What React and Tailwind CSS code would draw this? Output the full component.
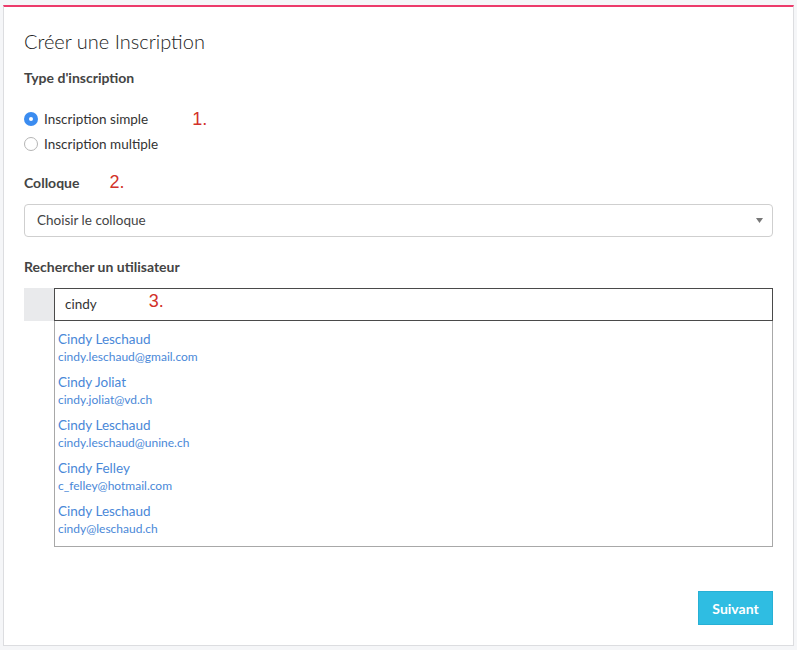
const USERS = [
  { name: 'Cindy Leschaud', email: 'cindy.leschaud@gmail.com' },
  { name: 'Cindy Joliat', email: 'cindy.joliat@vd.ch' },
  { name: 'Cindy Leschaud', email: 'cindy.leschaud@unine.ch' },
  { name: 'Cindy Felley', email: 'c_felley@hotmail.com' },
  { name: 'Cindy Leschaud', email: 'cindy@leschaud.ch' },
]

function Note({ children, className = '' }) {
  return (
    <span className={`text-[18px] font-normal leading-none text-[#d2312a] font-['Liberation_Sans',sans-serif] ${className}`}>
      {children}
    </span>
  )
}

export default function App() {
  return (
    <div className="min-h-[650px] bg-[#f5f6f8] px-[3px] pt-[5px] font-['Lato',sans-serif] text-[#333]">
      <div className="h-[641px] border-t-2 border-t-[#ec3b6b] border-x border-b border-x-[#dcdde0] border-b-[#dcdde0] bg-white px-5">
        <h1 className="pt-[19px] text-[20px] font-light leading-[30px] text-[#222]">Créer une Inscription</h1>

        {/* Type */}
        <div className="mt-[14px] text-[14px] font-bold leading-4 text-[#444]">Type d'inscription</div>
        <div className="mt-[24px] flex flex-col gap-[7px]">
          <label className="flex h-[18px] items-center text-[13.5px]">
            <span className="mr-[6px] flex h-[14px] w-[14px] items-center justify-center rounded-full bg-[#3b8cf0]">
              <span className="h-[4px] w-[4px] rounded-full bg-white" />
            </span>
            Inscription simple
            <Note className="ml-[44px]">1.</Note>
          </label>
          <label className="flex h-[18px] items-center text-[13.5px]">
            <span className="mr-[6px] h-[14px] w-[14px] rounded-full border border-[#b5b5b5] bg-white" />
            Inscription multiple
          </label>
        </div>

        {/* Colloque */}
        <div className="mt-[20px] flex h-[18px] items-center text-[14px] font-bold text-[#444]">
          Colloque
          <Note className="ml-[30px]">2.</Note>
        </div>
        <div className="mt-[13px] flex h-[33px] items-center justify-between rounded-[4px] border border-[#cfcfcf] pl-3 pr-[9px] text-[13.5px] text-[#444]">
          <span>Choisir le colloque</span>
          <svg width="7" height="5" viewBox="0 0 7 5">
            <path d="M0 0h7L3.5 5z" fill="#777" />
          </svg>
        </div>

        {/* Recherche */}
        <div className="mt-[22px] text-[14px] font-bold leading-4 text-[#444]">Rechercher un utilisateur</div>
        <div className="mt-[13px] flex h-[33px]">
          <div className="w-[30px] bg-[#e9eaec]" />
          <div className="flex flex-1 items-center border border-[#4a4a4a] px-[10px] text-[13.5px] text-[#333]">
            cindy
            <Note className="ml-[52px] -mt-[8px]">3.</Note>
          </div>
        </div>
        <div className="ml-[30px] h-[226px] border-x border-b border-[#a8a8a8] px-[3px] pt-[8px]">
          {USERS.map((u, i) => (
            <div key={i} className="h-[43px] text-[#4a88d8]">
              <div className="text-[13.5px] leading-[20px]">{u.name}</div>
              <div className="text-[12px] leading-[16px]">{u.email}</div>
            </div>
          ))}
        </div>

        <div className="mt-[44px] flex justify-end">
          <button className="h-[34px] w-[75px] border border-[#27b0d5] bg-[#2fbde2] text-[14px] font-bold text-white">
            Suivant
          </button>
        </div>
      </div>
    </div>
  )
}
